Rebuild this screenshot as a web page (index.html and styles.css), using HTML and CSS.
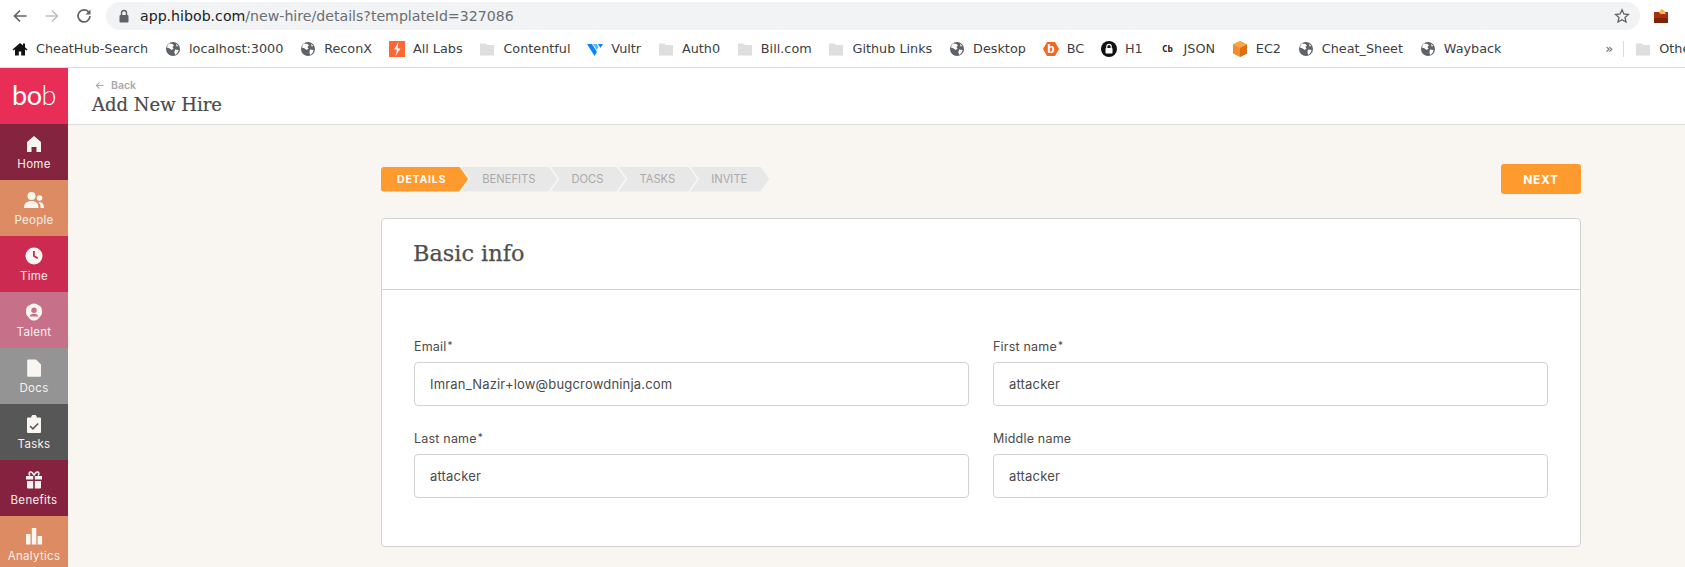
FILE: index.html
```html
<!DOCTYPE html>
<html>
<head>
    <meta charset="UTF-8">
    <title>Add New Hire</title>
    <link rel="stylesheet" href="styles.css">
</head>
<body>
    <svg class="defs" width="0" height="0">
        <symbol id="globe" viewBox="0 0 16 16">
            <circle cx="8" cy="8" r="7" fill="#5f6368"/>
            <path d="M4 2.6 7.5 3 9 4.6 7.4 6 8.6 7.6 6.6 9 4.8 7.6 2 6.4C2.400 4.800 3 3.400 4 2.600ZM10 8.400 13.600 9 12.800 11.400 10.400 14 9.400 11.400Z" fill="#fff"/>
            <path d="M11 2.800 13.400 5 11.600 5.600Z" fill="#fff"/>
        </symbol>
        <symbol id="folder" viewBox="0 0 16 16">
            <path d="M1 2.500h5.500L8 4h7v10.500H1z" fill="#dedede"/>
        </symbol>
    </svg>

    <div class="toolbar">
        <svg class="tb-icon back" viewBox="0 0 16 16"><path d="M14.500 8H2.500M8 2.500 2.500 8 8 13.500" fill="none" stroke="#5f6368" stroke-width="1.700"/></svg>
        <svg class="tb-icon forward" viewBox="0 0 16 16"><path d="M1.500 8h12M8 2.500 13.500 8 8 13.500" fill="none" stroke="#bdc1c6" stroke-width="1.700"/></svg>
        <svg class="tb-icon reload" viewBox="0 0 16 16"><path d="M13 4.600A6 6 0 1 0 14 8" fill="none" stroke="#5f6368" stroke-width="1.700"/><path d="M14.500 1.500v5h-5z" fill="#5f6368"/></svg>
        <div class="address">
            <svg class="lock" viewBox="0 0 12 14"><path d="M3.500 6V4a2.500 2.500 0 0 1 5 0v2" fill="none" stroke="#5f6368" stroke-width="1.400"/><rect x="1.500" y="6" width="9" height="7.500" rx="1" fill="#5f6368"/></svg>
            <span class="url"><span class="host">app.hibob.com</span>/new-hire/details?templateId=327086</span>
            <svg class="star" viewBox="0 0 16 16"><path d="m8 1.800 1.900 4.200 4.500.5-3.400 3 1 4.500L8 11.700 4 14l1-4.500-3.400-3 4.500-.5z" fill="none" stroke="#5f6368" stroke-width="1.300"/></svg>
        </div>
        <svg class="bag" viewBox="0 0 16 16"><rect x="1" y="4" width="14" height="11" fill="#a8300c"/><rect x="1" y="10" width="14" height="5" fill="#7d2308"/><path d="m8 1 3 1.500L13 6H8L6 5z" fill="#f5b84a"/></svg>
    </div>

    <div class="bookmarks">
        <a class="bm"><svg viewBox="0 0 16 16"><path d="M8 2 .5 8.500l1 1L3 8.200V14.500h3.800v-4h2.400v4H13V8.200l1.500 1.300 1-1L13 6.200V2.500h-2v2z" fill="#111"/></svg>CheatHub-Search</a>
        <a class="bm"><svg><use href="#globe"/></svg>localhost:3000</a>
        <a class="bm"><svg><use href="#globe"/></svg>ReconX</a>
        <a class="bm"><svg viewBox="0 0 16 16"><rect width="16" height="16" fill="#ff6633"/><path d="M9.500 1 5 8.500h3L6.500 15l5-7.500h-3z" fill="#fff"/></svg>All Labs</a>
        <a class="bm"><svg><use href="#folder"/></svg>Contentful</a>
        <a class="bm"><svg viewBox="0 0 16 16"><path d="M0 3h5l5 8-2.500 4z" fill="#0a84ff"/><path d="M6 3h3.500l2 3.200L9.800 9z" fill="#51b9ff"/><path d="M11 3h5l-2.500 4z" fill="#0a84ff"/></svg>Vultr</a>
        <a class="bm"><svg><use href="#folder"/></svg>Auth0</a>
        <a class="bm"><svg><use href="#folder"/></svg>Bill.com</a>
        <a class="bm"><svg><use href="#folder"/></svg>Github Links</a>
        <a class="bm"><svg><use href="#globe"/></svg>Desktop</a>
        <a class="bm"><svg viewBox="0 0 16 16"><path d="M4 1h8l4 7-4 7H4L0 8z" fill="#f26822"/><text x="8" y="12" text-anchor="middle" class="bc-b">b</text></svg>BC</a>
        <a class="bm"><svg viewBox="0 0 16 16"><circle cx="8" cy="8" r="8" fill="#111"/><path d="M5.800 7V5.500a2.200 2.200 0 0 1 4.400 0V7" fill="none" stroke="#fff" stroke-width="1.200"/><rect x="4.500" y="7" width="7" height="5.500" rx=".8" fill="#fff"/></svg>H1</a>
        <a class="bm"><span class="cb">Cb</span>JSON</a>
        <a class="bm"><svg viewBox="0 0 16 16"><path d="M8 0 15 3.500v9L8 16 1 12.500v-9z" fill="#f58b2a"/><path d="M8 7 15 3.500 8 0 1 3.500z" fill="#f9a648"/><path d="M8 7v9l7-3.500v-9z" fill="#dd6f12"/></svg>EC2</a>
        <a class="bm"><svg><use href="#globe"/></svg>Cheat_Sheet</a>
        <a class="bm"><svg><use href="#globe"/></svg>Wayback</a>
        <div class="bm-end">
            <span class="more">»</span>
            <span class="bm-sep"></span>
            <a class="bm"><svg><use href="#folder"/></svg>Other bookmarks</a>
        </div>
    </div>

    <div class="app">
        <nav class="sidebar">
            <div class="logo"><b>bo</b><i>b</i></div>
            <a class="nav-item home">
                <svg viewBox="0 0 18 18"><path d="M9 1 16 7v10h-4.500v-5h-5v5H2V7z"/></svg>
                Home
            </a>
            <a class="nav-item people">
                <svg viewBox="0 0 22 18"><circle cx="8.500" cy="5" r="4"/><circle cx="16.500" cy="7" r="2.800"/><path d="M1 17c0-5 3-7 7.500-7s7 2 7 7zM16.500 11c3 0 4.500 2 4.500 6h-3.500c0-2.500-.5-4.300-1.800-5.800z"/></svg>
                People
            </a>
            <a class="nav-item time">
                <svg viewBox="0 0 18 18"><path fill-rule="evenodd" d="M9 .5a8.500 8.500 0 1 0 0 17 8.500 8.500 0 0 0 0-17ZM8 4h1.800v4.600l3.400 2-.9 1.500L8 9.600Z"/></svg>
                Time
            </a>
            <a class="nav-item talent">
                <svg viewBox="0 0 18 18"><path fill-rule="evenodd" d="M9 .5c2 0 3 1 4 1.500s3 1 3.500 3 .5 2.500.5 4-.2 2.500-1 3.500-2 2.500-3 3.500-2.500 1.500-4 1.500-3-.5-4-1.500-2.200-2.500-3-3.500S1 10.500 1 9s0-2 .5-4 2.500-2.500 3.500-3S7 .5 9 .5ZM9 4.500a2.700 2.700 0 1 0 0 5.400 2.700 2.700 0 0 0 0-5.400ZM4.500 13.500h9c-.5-2-2.300-2.800-4.500-2.800s-4 .8-4.500 2.800Z"/></svg>
                Talent
            </a>
            <a class="nav-item docs">
                <svg viewBox="0 0 18 18"><path d="M3 .5h8l5 5V17a.8.8 0 0 1-.8.800H3a.8.800 0 0 1-.8-.8V1.300A.8.800 0 0 1 3 .5Z"/></svg>
                Docs
            </a>
            <a class="nav-item tasks">
                <svg viewBox="0 0 18 18"><path fill-rule="evenodd" d="M3 2.500h3.200a2.800 2.800 0 0 1 5.600 0H15a1 1 0 0 1 1 1V17a1 1 0 0 1-1 1H3a1 1 0 0 1-1-1V3.500a1 1 0 0 1 1-1ZM12.600 8l-4.700 4.700-2.300-2.200-1.100 1.100 3.400 3.300 5.800-5.800Z"/></svg>
                Tasks
            </a>
            <a class="nav-item benefits">
                <svg viewBox="0 0 18 18"><path d="M1 5h7.200v3.500H1zM9.800 5H17v3.500H9.800zM2 10h6.200v7.500H3a1 1 0 0 1-1-1zM9.800 10H16v6.500a1 1 0 0 1-1 1H9.800z"/><path d="M9 4.500C8 2 6.500.8 5.300 1S3.500 3 5 4.500M9 4.500C10 2 11.500.8 12.700 1S14.500 3 13 4.500" fill="none" stroke="currentColor" stroke-width="1.500"/></svg>
                Benefits
            </a>
            <a class="nav-item analytics">
                <svg viewBox="0 0 18 18"><rect x="1" y="7" width="4.500" height="10.500"/><rect x="6.800" y="1" width="4.500" height="16.500"/><rect x="12.600" y="9" width="4.500" height="8.500"/></svg>
                Analytics
            </a>
        </nav>

        <div class="page">
            <header class="page-head">
                <a class="back-link"><svg viewBox="0 0 10 10"><path d="M9.500 5h-8M5 1.500 1.500 5 5 8.500" fill="none" stroke="#aaa" stroke-width="1.200"/></svg>Back</a>
                <h1>Add New Hire</h1>
            </header>

            <main class="content">
                <div class="wizard-row">
                    <ol class="steps">
                        <li class="step active">DETAILS</li>
                        <li class="step">BENEFITS</li>
                        <li class="step">DOCS</li>
                        <li class="step">TASKS</li>
                        <li class="step">INVITE</li>
                    </ol>
                    <button class="next-btn">NEXT</button>
                </div>

                <section class="card">
                    <h2 class="card-title">Basic info</h2>
                    <div class="form-grid">
                        <div class="field">
                            <label>Email<span class="req">*</span></label>
                            <div class="input">Imran_Nazir+low@bugcrowdninja.com</div>
                        </div>
                        <div class="field">
                            <label>First name<span class="req">*</span></label>
                            <div class="input">attacker</div>
                        </div>
                        <div class="field">
                            <label>Last name<span class="req">*</span></label>
                            <div class="input">attacker</div>
                        </div>
                        <div class="field">
                            <label>Middle name</label>
                            <div class="input">attacker</div>
                        </div>
                    </div>
                </section>
            </main>
        </div>
    </div>
</body>
</html>
```

FILE: styles.css
```css
* {
    box-sizing: border-box;
}

html, body {
    height: 100%;
}

body {
    margin: 0;
    overflow: hidden;
    display: flex;
    flex-direction: column;
    background: #fff;
    font-family: Inter, "Liberation Sans", sans-serif;
}

.defs {
    position: absolute;
}

/* browser chrome */
.toolbar {
    flex: none;
    height: 30px;
    padding-top: 2px;
    display: flex;
    align-items: center;
}

.tb-icon {
    flex: none;
    width: 16px;
    height: 16px;
    margin-left: 16px;
}

.back {
    margin-left: 12px;
}

.address {
    flex: none;
    width: 1534px;
    height: 28px;
    margin-left: 14px;
    padding: 0 10px 0 12px;
    border-radius: 14px;
    background: #f1f3f4;
    display: flex;
    align-items: center;
}

.lock {
    width: 12px;
    height: 14px;
}

.url {
    margin-left: 10px;
    font-family: "DejaVu Sans", sans-serif;
    font-size: 14.150px;
    color: #6b6e72;
}

.host {
    color: #202124;
}

.star {
    width: 16px;
    height: 16px;
    margin-left: auto;
}

.bag {
    flex: none;
    width: 16px;
    height: 16px;
    margin-left: 13px;
}

.bookmarks {
    flex: none;
    height: 38px;
    padding: 0 0 0 12px;
    border-bottom: 1px solid #dadce0;
    display: flex;
    align-items: center;
    gap: 16.800px;
    white-space: nowrap;
    overflow: hidden;
}

.bm {
    flex: none;
    display: flex;
    align-items: center;
    gap: 8px;
    font-family: "DejaVu Sans", sans-serif;
    font-size: 12.800px;
    color: #3c4043;
}

.bm svg {
    flex: none;
    width: 16px;
    height: 16px;
}

.bc-b {
    font: bold 12px "Liberation Sans", sans-serif;
    fill: #fff;
}

.cb {
    width: 16px;
    text-align: center;
    font-family: "DejaVu Sans Mono", monospace;
    font-size: 9px;
    font-weight: bold;
    color: #222;
}

.bm-end {
    flex: none;
    margin-left: 87px;
    display: flex;
    align-items: center;
}

.more {
    font-family: "DejaVu Sans", sans-serif;
    font-size: 13px;
    color: #5f6368;
}

.bm-sep {
    width: 1px;
    height: 16px;
    margin: 0 11px 0 10px;
    background: #dadce0;
}

/* app */
.app {
    flex: 1;
    min-height: 0;
    display: flex;
}

.sidebar {
    flex: none;
    width: 68px;
}

.logo {
    height: 56px;
    padding-bottom: 3px;
    background: #e82d56;
    color: #fff;
    display: flex;
    align-items: center;
    justify-content: center;
    font-family: Lato, sans-serif;
    font-size: 27px;
    letter-spacing: -.5px;
    line-height: 1;
}

.logo b {
    font-weight: 400;
}

.logo i {
    font-style: normal;
    font-weight: 300;
}

.nav-item {
    height: 56px;
    padding-top: 11px;
    display: flex;
    flex-direction: column;
    align-items: center;
    gap: 4px;
    font-size: 11.500px;
    letter-spacing: .3px;
    color: #f9f0ec;
}

.nav-item svg {
    width: 18px;
    height: 18px;
    fill: #f9f6f1;
    color: #f9f6f1;
}

.nav-item.people svg {
    width: 22px;
}

.home { background: #85243f; }
.people { background: #dd8b62; }
.time { background: #cd2a52; }
.talent { background: #c7708a; }
.docs { background: #949494; }
.tasks { background: #575757; }
.benefits { background: #85223f; }
.analytics { background: #dd8b62; }

.page {
    flex: 1;
    min-width: 0;
    display: flex;
    flex-direction: column;
}

.page-head {
    flex: none;
    height: 57px;
    padding: 11px 0 0 24px;
    border-bottom: 1px solid #dcdcdc;
}

.back-link {
    padding-left: 3px;
    display: flex;
    align-items: center;
    gap: 7px;
    font-size: 10.500px;
    font-weight: 600;
    color: #aaa;
}

.back-link svg {
    width: 9px;
    height: 9px;
}

h1 {
    margin: 2px 0 0;
    font-family: "DejaVu Serif", serif;
    font-size: 18px;
    font-weight: normal;
    -webkit-text-stroke: .2px #4a4a4a;
    color: #4a4a4a;
}

.content {
    flex: 1;
    padding: 39px 104px 0 313px;
    background: #f9f6f1;
}

.wizard-row {
    height: 30px;
    display: flex;
    align-items: center;
    justify-content: space-between;
}

.steps {
    margin: 0;
    padding: 0;
    list-style: none;
    display: flex;
}

.step {
    height: 25px;
    margin-left: -7px;
    padding: 0 22px 0 21px;
    background: #e8e8e8;
    clip-path: polygon(0 0, calc(100% - 9px) 0, 100% 50%, calc(100% - 9px) 100%, 0 100%, 9px 50%);
    font-size: 11.200px;
    line-height: 25px;
    color: #aaa;
}

.step.active {
    margin-left: 0;
    padding-left: 16px;
    background: #ff9a2e;
    border-radius: 3px 0 0 3px;
    clip-path: polygon(0 0, calc(100% - 9px) 0, 100% 50%, calc(100% - 9px) 100%, 0 100%);
    font-size: 10.500px;
    font-weight: 700;
    letter-spacing: .8px;
    color: #fff;
}

.next-btn {
    width: 80px;
    height: 30px;
    padding: 0;
    border: none;
    border-radius: 3px;
    background: #ff9a2e;
    font-family: inherit;
    font-size: 12px;
    font-weight: 700;
    letter-spacing: .7px;
    color: #fff;
}

.card {
    margin-top: 24px;
    height: 329px;
    border: 1px solid #d2d2d2;
    border-radius: 4px;
    background: #fff;
}

.card-title {
    height: 71px;
    margin: 0;
    padding: 0 31px;
    border-bottom: 1px solid #d2d2d2;
    font-family: "DejaVu Serif", serif;
    font-size: 22.400px;
    font-weight: normal;
    -webkit-text-stroke: .25px #4f4f4f;
    line-height: 69px;
    color: #4f4f4f;
}

.form-grid {
    padding: 48px 32px 0;
    display: grid;
    grid-template-columns: 1fr 1fr;
    column-gap: 24px;
    row-gap: 24px;
}

.field label {
    display: block;
    height: 16px;
    margin-bottom: 8px;
    font-size: 12.500px;
    letter-spacing: .2px;
    line-height: 17px;
    color: #4a4a4a;
}

.req {
    margin-left: 1px;
    font-size: 10px;
    line-height: 0;
    vertical-align: 2px;
}

.input {
    height: 44px;
    padding: 0 15px;
    border: 1px solid #d2d2d2;
    border-radius: 4px;
    font-size: 13px;
    letter-spacing: .18px;
    line-height: 42px;
    color: #4a4a4a;
}
```
